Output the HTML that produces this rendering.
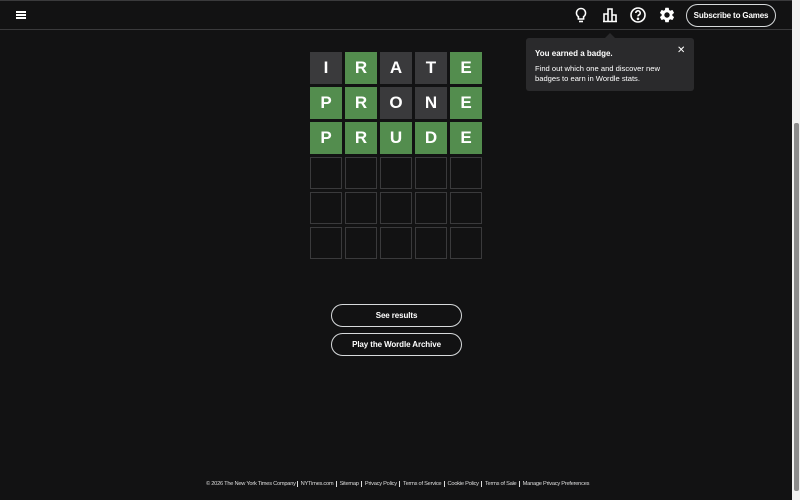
<!DOCTYPE html>
<html><head><meta charset="utf-8"><style>
*{margin:0;padding:0;box-sizing:border-box}
html,body{width:800px;height:500px;overflow:hidden;background:#121213;font-family:"Liberation Sans",sans-serif;color:#fff}
.page{position:absolute;left:0;top:0;width:792px;height:500px;background:#121213}
.top{position:absolute;left:0;top:0;width:792px;height:1px;background:#3a3a3c}
.hdr{position:absolute;left:0;top:29px;width:792px;height:1px;background:#3a3a3c}
.sb{position:absolute;left:792px;top:0;width:8px;height:500px;background:#f1f1f1}
.thumb{position:absolute;left:794px;top:123px;width:5px;height:368px;background:#8c8c8c;border-radius:2px}
.tile{position:absolute;width:32px;height:32px;display:flex;align-items:center;justify-content:center;font-weight:bold;font-size:17px}
.g{background:#538d4e}.d{background:#3a3a3c}.e{border:1px solid #3a3a3c}
.btn{position:absolute;left:331px;width:131px;height:23px;border:1px solid #d7dadc;border-radius:12px;display:flex;align-items:center;justify-content:center;font-size:8px;font-weight:bold;letter-spacing:-0.1px}
.tip{position:absolute;left:526px;top:38px;width:168px;height:53px;background:#2a2a2c;border-radius:3px}
.tip:before{content:"";position:absolute;left:79px;top:-5px;border-left:5px solid transparent;border-right:5px solid transparent;border-bottom:5px solid #2a2a2c}
.foot{position:absolute;top:481px;left:206px;font-size:5.7px;color:#ddd;white-space:nowrap;letter-spacing:-0.25px}
.foot span{border-left:1px solid #ddd;padding:0 2.6px}
</style></head><body>
<div class="page">
<div class="top"></div>
<div class="hdr"></div>
<div style="position:absolute;left:16px;top:11px;width:10px;height:2px;background:#fff"></div>
<div style="position:absolute;left:16px;top:14px;width:10px;height:2px;background:#fff"></div>
<div style="position:absolute;left:16px;top:17px;width:10px;height:2px;background:#fff"></div>
<svg style="position:absolute;left:572px;top:6px" width="18" height="18" viewBox="0 0 18 18" fill="none" stroke="#fff" stroke-width="1.6"><path d="M9 2.5a4.5 4.5 0 0 0-2.6 8.2V13h5.2v-2.3A4.5 4.5 0 0 0 9 2.5z"/><path d="M7 15.5h4"/></svg>
<svg style="position:absolute;left:601px;top:6px" width="18" height="18" viewBox="0 0 18 18" fill="none" stroke="#fff" stroke-width="1.6"><path d="M2 15.5h14M3 15.5V8h4v7.5M7 15.5V3h4v12.5M11 15.5V9h4v6.5"/></svg>
<svg style="position:absolute;left:629px;top:6px" width="18" height="18" viewBox="0 0 18 18" fill="none" stroke="#fff" stroke-width="1.6"><circle cx="9" cy="9" r="7"/><path d="M6.8 7a2.2 2.2 0 1 1 3 2c-.6.3-.8.7-.8 1.4"/><circle cx="9" cy="12.8" r=".5" fill="#fff"/></svg>
<svg style="position:absolute;left:658px;top:6px" width="18" height="18" viewBox="0 0 24 24"><path fill="#fff" d="M19.14 12.94c.04-.3.06-.61.06-.94 0-.32-.02-.64-.07-.94l2.03-1.58a.49.49 0 0 0 .12-.61l-1.92-3.32a.49.49 0 0 0-.59-.22l-2.39.96c-.5-.38-1.03-.7-1.62-.94l-.36-2.54a.48.48 0 0 0-.48-.41h-3.84c-.24 0-.43.17-.47.41l-.36 2.54c-.59.24-1.13.57-1.62.94l-2.39-.96a.49.49 0 0 0-.59.22L2.74 8.87a.47.47 0 0 0 .12.61l2.03 1.58c-.05.3-.09.63-.09.94s.02.64.07.94l-2.03 1.58a.49.49 0 0 0-.12.61l1.92 3.32c.12.22.37.29.59.22l2.39-.96c.5.38 1.03.7 1.62.94l.36 2.54c.05.24.24.41.48.41h3.84c.24 0 .44-.17.47-.41l.36-2.54c.59-.24 1.13-.56 1.62-.94l2.39.96c.22.08.47 0 .59-.22l1.92-3.32a.47.47 0 0 0-.12-.61l-2.01-1.58zM12 15.6A3.6 3.6 0 1 1 12 8.4a3.6 3.6 0 0 1 0 7.2z"/></svg>
<div style="position:absolute;left:686px;top:4px;width:90px;height:23px;border:1px solid #d7dadc;border-radius:12px;font-size:8px;font-weight:bold;letter-spacing:-0.15px;display:flex;align-items:center;justify-content:center">Subscribe to Games</div>
<div class="tip">
<div style="position:absolute;left:9px;top:11px;font-size:8px;font-weight:bold">You earned a badge.</div>
<div style="position:absolute;left:9px;top:26px;font-size:7.6px;line-height:9.5px;width:150px">Find out which one and discover new badges to earn in Wordle stats.</div>
<div style="position:absolute;left:151px;top:7px;font-size:10px">✕</div>
</div>
<div id="grid"></div>
<div class="btn" style="top:304px">See results</div>
<div class="btn" style="top:333px">Play the Wordle Archive</div>
<div class="foot">© 2026 The New York Times Company <span>NYTimes.com</span><span>Sitemap</span><span>Privacy Policy</span><span>Terms of Service</span><span>Cookie Policy</span><span>Terms of Sale</span><span>Manage Privacy Preferences</span></div>
</div>
<div class="sb"></div><div class="thumb"></div>
<script>
var rows=[["I","d"],["R","g"],["A","d"],["T","d"],["E","g"],["P","g"],["R","g"],["O","d"],["N","d"],["E","g"],["P","g"],["R","g"],["U","g"],["D","g"],["E","g"]];
var h="";for(var r=0;r<6;r++)for(var c=0;c<5;c++){var i=r*5+c,t=rows[i];h+='<div class="tile '+(t?t[1]:"e")+'" style="left:'+(310+c*35)+'px;top:'+(52+r*35)+'px">'+(t?t[0]:"")+'</div>';}
document.getElementById("grid").innerHTML=h;
</script>
</body></html>
